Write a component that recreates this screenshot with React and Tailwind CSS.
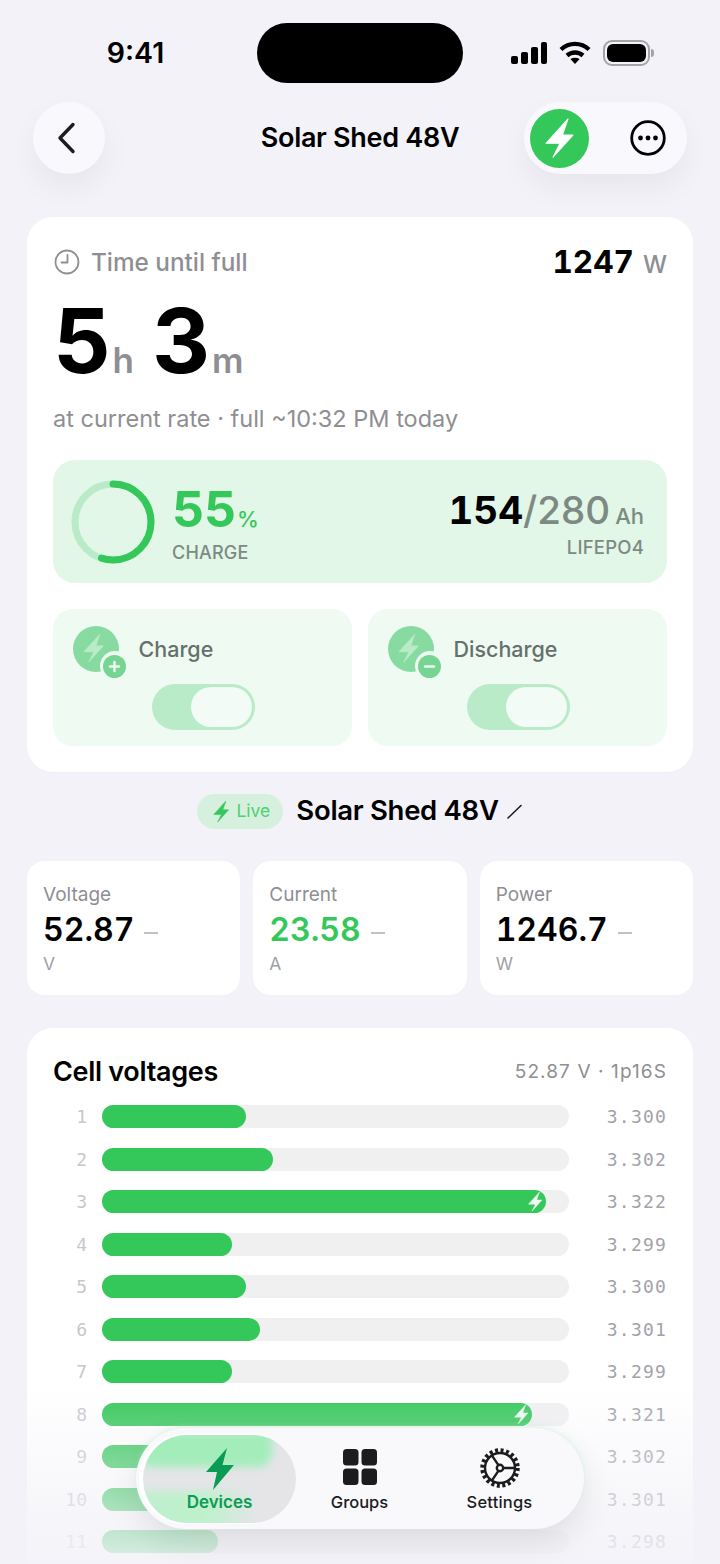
import { Fragment } from 'react'

const BOLT = 'M16.6 1.1 4 15h8L8 23l11.4-12.7h-6z'

const cells = [
  { n: 1, w: 144, v: '3.300' },
  { n: 2, w: 171, v: '3.302' },
  { n: 3, w: 444, v: '3.322', bolt: true },
  { n: 4, w: 130, v: '3.299' },
  { n: 5, w: 144, v: '3.300' },
  { n: 6, w: 158, v: '3.301' },
  { n: 7, w: 130, v: '3.299' },
  { n: 8, w: 430, v: '3.321', bolt: true },
  { n: 9, w: 171, v: '3.302' },
  { n: 10, w: 158, v: '3.301' },
  { n: 11, w: 116, v: '3.298' },
]

function Bolt({ className }) {
  return (
    <svg viewBox="0 0 24 24" className={className} fill="currentColor" stroke="currentColor" strokeWidth="0.6" strokeLinejoin="round">
      <path d={BOLT} />
    </svg>
  )
}

function StatusIcons() {
  return (
    <div className="flex items-center h-[60px] ml-[48px]">
      <svg width="36" height="22" viewBox="0 0 36 22" fill="#000">
        <rect x="0" y="14" width="7" height="8" rx="2" />
        <rect x="10" y="10" width="7" height="12" rx="2" />
        <rect x="20" y="5" width="7" height="17" rx="2" />
        <rect x="30" y="0" width="6" height="22" rx="2" />
      </svg>
      <svg width="32" height="24" viewBox="0 0 32 24" fill="none" stroke="#000" strokeWidth="4.4" className="ml-[12px]">
        <path d="M2 8.5C10 1 22 1 30 8.5" />
        <path d="M8 14.5c4.8-4 11.2-4 16 0" />
        <path d="M16 23l-4.6-5c2.8-1.8 6.4-1.8 9.2 0z" fill="#000" stroke="none" />
      </svg>
      <div className="relative ml-[12px] w-[47px] h-[26px] rounded-[9px] border-2 border-[#a4a4a8] p-[2px]">
        <div className="w-full h-full rounded-[6px] bg-black" />
        <div className="absolute right-[-6px] top-[7px] w-[3px] h-[8px] rounded-r-full bg-[#a4a4a8]" />
      </div>
    </div>
  )
}

function Header() {
  return (
    <div className="flex items-center h-[72px] px-[33px]">
      <button className="w-[72px] h-[72px] shrink-0 rounded-full bg-[#f9f9fd] flex items-center justify-center shadow-[0_14px_30px_rgba(0,0,0,0.05)]">
        <svg width="24" height="34" viewBox="0 0 24 34" fill="none" stroke="#1c1c1e" strokeWidth="3.4" strokeLinecap="round" strokeLinejoin="round" className="-translate-x-[2px]">
          <path d="M18 3.5 5 17l13 13.5" />
        </svg>
      </button>
      <div className="flex-1 text-center pl-[91px] text-[27px] font-semibold text-black tracking-[-0.3px]">Solar Shed 48V</div>
      <div className="w-[163px] h-[72px] shrink-0 rounded-full bg-[#f9f9fd] flex items-center justify-between pl-[6px] pr-[21px] shadow-[0_14px_30px_rgba(0,0,0,0.05)]">
        <div className="w-[59px] h-[59px] rounded-full bg-[#34c759] flex items-center justify-center text-white">
          <Bolt className="w-[42px] h-[42px]" />
        </div>
        <svg width="36" height="36" viewBox="0 0 36 36" fill="#000">
          <circle cx="18" cy="18" r="16.3" fill="none" stroke="#000" strokeWidth="2.8" />
          <circle cx="10.5" cy="18" r="2.4" />
          <circle cx="18" cy="18" r="2.4" />
          <circle cx="25.5" cy="18" r="2.4" />
        </svg>
      </div>
    </div>
  )
}

function Ring() {
  return (
    <svg width="84" height="84" viewBox="0 0 84 84" fill="none" className="shrink-0">
      <circle cx="42" cy="42" r="38" stroke="#b9ebc8" strokeWidth="7" />
      <circle
        cx="42"
        cy="42"
        r="38"
        stroke="#34c759"
        strokeWidth="7"
        strokeLinecap="round"
        strokeDasharray="131 239"
        transform="rotate(-90 42 42)"
      />
    </svg>
  )
}

function ToggleCard({ label, sign }) {
  return (
    <div className="flex-1 h-[137px] rounded-[20px] bg-[#eefaf2] pt-[17px] pl-[19.5px]">
      <div className="flex items-center">
        <div className="relative w-[46px] h-[46px] rounded-full bg-[#88dba0] flex items-center justify-center text-[#b9ebc8]">
          <Bolt className="w-[30px] h-[30px] -translate-x-[2px] -translate-y-[1px]" />
          <div className="absolute right-[-11px] bottom-[-9px] w-[30px] h-[30px] rounded-full bg-[#eefaf2] flex items-center justify-center">
            <div className="w-[23px] h-[23px] rounded-full bg-[#76d592] flex items-center justify-center">
              <svg width="13" height="13" viewBox="0 0 13 13" stroke="#eefaf2" strokeWidth="2.4" strokeLinecap="round">
                <path d="M2 6.5h9" />
                {sign === '+' && <path d="M6.5 2v9" />}
              </svg>
            </div>
          </div>
        </div>
        <span className="ml-[20px] text-[21.5px] font-medium text-[#66706a]">{label}</span>
      </div>
      <div className="flex justify-center mt-[12px] pr-[17px]">
        <div className="w-[103px] h-[46px] rounded-full bg-[#b9ebc8] p-[3px] flex justify-end">
          <div className="w-[61px] h-[40px] rounded-full bg-[#f2fbf5]" />
        </div>
      </div>
    </div>
  )
}

function Summary() {
  return (
    <div className="mt-[43px] mx-[27px] h-[555px] rounded-[26px] bg-white px-[26px] pt-[26px] shadow-[0_1px_2px_rgba(0,0,0,0.02)]">
      <div className="flex items-center justify-between h-[38px]">
        <div className="flex items-center gap-[11px] ml-[1px]">
          <svg width="26" height="26" viewBox="0 0 26 26" fill="none" stroke="#8e8e93" strokeWidth="1.8" strokeLinecap="round" strokeLinejoin="round">
            <circle cx="13" cy="13" r="11.5" />
            <path d="M13.5 6v7.5H7.5" />
          </svg>
          <span className="text-[24.3px] font-medium text-[#8e8e93]">Time until full</span>
        </div>
        <div className="flex items-baseline gap-[9px]">
          <span className="text-[31.5px] font-bold text-black tabular-nums">1247</span>
          <span className="text-[24px] font-medium text-[#8e8e93]">W</span>
        </div>
      </div>
      <div className="flex items-baseline h-[106px] mt-[7px] leading-none">
        <span className="text-[90px] font-bold text-black leading-[106px] tracking-[-1px]">5</span>
        <span className="text-[35px] font-semibold text-[#8e8e93] ml-[3px]">h</span>
        <span className="text-[90px] font-bold text-black leading-[106px] tracking-[-1px] ml-[18px]">3</span>
        <span className="text-[35px] font-semibold text-[#8e8e93] ml-[3px]">m</span>
      </div>
      <div className="mt-[10px] h-[30px] text-[23.5px] leading-[30px] text-[#8e8e93]">at current rate · full ~10:32 PM today</div>

      <div className="mt-[26px] h-[123px] rounded-[22px] bg-[#e2f7e8] flex items-center justify-between pl-[18px] pr-[23px]">
        <div className="flex items-center">
          <Ring />
          <div className="ml-[17px]">
            <div className="flex items-baseline h-[48px] leading-none mt-[7px]">
              <span className="text-[50px] font-bold text-[#34c759] leading-[48px]">55</span>
              <span className="text-[22px] font-medium text-[#34c759] ml-[1px]">%</span>
            </div>
            <div className="text-[18px] font-medium text-[#7d8a82] mt-[6px] tracking-[0.2px]">CHARGE</div>
          </div>
        </div>
        <div className="flex flex-col items-end pt-[5px]">
          <div className="flex items-baseline leading-none h-[46px]">
            <span className="text-[38.5px] font-bold text-black leading-[46px] tabular-nums">154</span>
            <span className="text-[38.5px] font-medium text-[#7d8a82] leading-[46px]">/280</span>
            <span className="text-[22px] font-medium text-[#7d8a82] ml-[5px]">Ah</span>
          </div>
          <div className="text-[18.5px] font-medium text-[#7d8a82] tracking-[0.2px] mt-[1px]">LIFEPO4</div>
        </div>
      </div>

      <div className="flex gap-[16px] mt-[26px]">
        <ToggleCard label="Charge" sign="+" />
        <ToggleCard label="Discharge" sign="-" />
      </div>
    </div>
  )
}

function LiveRow() {
  return (
    <div className="flex items-center justify-center mt-[21px] h-[36px] pl-[1px]">
      <div className="w-[86px] h-[35px] rounded-full bg-[#d6f0de] flex items-center justify-center gap-[3px] text-[#34c759]">
        <Bolt className="w-[23px] h-[23px]" />
        <span className="text-[17.5px] text-[#4fcf72]">Live</span>
      </div>
      <span className="ml-[13px] text-[27.5px] font-semibold text-black tracking-[-0.3px]">Solar Shed 48V</span>
      <svg width="18" height="18" viewBox="0 0 18 18" fill="none" stroke="#1c1c1e" strokeLinecap="round" className="ml-[7px]">
        <path d="M2 16 15 3.5" strokeWidth="1.6" />
      </svg>
    </div>
  )
}

function Stat({ label, value, unit, green }) {
  return (
    <div className="flex-1 h-[134px] rounded-[18px] bg-white pl-[16px] pt-[22px]">
      <div className="text-[19px] leading-[24px] text-[#8e8e93]">{label}</div>
      <div className="flex items-center mt-[5px] h-[36px]">
        <span className={`text-[32px] font-semibold leading-[36px] tabular-nums ${green ? 'text-[#34c759]' : 'text-black'}`}>{value}</span>
        <span className="ml-[10px] w-[14px] h-[2px] mt-[6px] bg-[#c2c2c6]" />
      </div>
      <div className="text-[17.5px] leading-[22px] mt-[5px] text-[#a0a0a5]">{unit}</div>
    </div>
  )
}

function CellRow({ n, w, v, bolt }) {
  return (
    <div className="flex items-center h-[42.5px]">
      <div className="w-[34px] text-right text-[18px] text-[#c7c7cc] [font-family:'DejaVu_Sans_Mono',monospace]">{n}</div>
      <div className="ml-[15px] w-[467px] h-[23px] rounded-full bg-[#f0f0f1]">
        <div className="h-full rounded-full bg-[#34c759] flex items-center justify-end text-[#eefaf2]" style={{ width: w }}>
          {bolt && <Bolt className="w-[21px] h-[21px]" />}
        </div>
      </div>
      <div className="ml-auto text-[18px] tracking-[1.2px] text-[#a2a2a7] [font-family:'DejaVu_Sans_Mono',monospace]">{v}</div>
    </div>
  )
}

function CellCard() {
  return (
    <div className="mt-[33px] mx-[27px] rounded-[26px] bg-white px-[26px] pt-[26px] pb-[30px]">
      <div className="flex items-center justify-between h-[36px]">
        <span className="text-[27px] font-semibold text-black tracking-[-0.3px]">Cell voltages</span>
        <span className="text-[19px] tracking-[1.1px] text-[#8e8e93]">52.87 V · 1p16S</span>
      </div>
      <div className="mt-[5.5px]">
        {cells.map((c) => (
          <Fragment key={c.n}>
            <CellRow {...c} />
          </Fragment>
        ))}
      </div>
    </div>
  )
}

function NavBar() {
  return (
    <div className="absolute left-[136px] top-[1428px] w-[448px] h-[101px] rounded-full bg-[#f9f9fc] shadow-[0_14px_34px_rgba(0,0,0,0.09),0_-2px_5px_rgba(190,240,205,0.35)] flex items-center p-[7px]">
      {/* active tab: gray capsule with the smeared green glass bands */}
      <div className="relative w-[153px] h-[88px] rounded-full bg-[#e5e5e8] overflow-hidden shrink-0 flex flex-col items-center justify-center pt-[3px] shadow-[-3px_0_0_1px_rgba(255,255,255,0.9)]">
        <div className="absolute left-[-4px] top-[-4px] w-[133px] h-[36px] bg-[#a3edba] blur-[4px] rounded-b-[14px]" />
        <div className="absolute left-[-8px] top-[56px] w-[122px] h-[40px] bg-gradient-to-r from-[#bff0cd] from-60% to-[#bff0cd]/0 blur-[4px]" />
        <svg width="34" height="44" viewBox="0 0 34 44" fill="#0a9c52" className="relative">
          <path d="M24 1 3 25h11L10 43 31 18H19.5z" />
        </svg>
        <span className="relative text-[17px] font-semibold text-[#0a9c52] leading-[22px]">Devices</span>
      </div>
      <div className="w-[127px] flex flex-col items-center pt-[4px]">
        <svg width="36" height="38" viewBox="0 0 36 38" fill="#1c1c1e">
          <rect x="1" y="1" width="15.5" height="16.5" rx="3.5" />
          <rect x="19.5" y="1" width="15.5" height="16.5" rx="3.5" />
          <rect x="1" y="20.5" width="15.5" height="16.5" rx="3.5" />
          <rect x="19.5" y="20.5" width="15.5" height="16.5" rx="3.5" />
        </svg>
        <span className="text-[16.5px] font-medium text-[#1c1c1e] leading-[22px] mt-[5px]">Groups</span>
      </div>
      <div className="w-[153px] flex flex-col items-center pt-[4px]">
        <svg width="40" height="40" viewBox="0 0 40 40" fill="none" stroke="#1c1c1e">
          <circle cx="20" cy="20" r="17.5" strokeWidth="4.5" strokeDasharray="3 2.5" />
          <circle cx="20" cy="20" r="15" strokeWidth="2.4" />
          <circle cx="20" cy="20" r="3.2" strokeWidth="2.4" />
          <path d="M23 20h12M18.4 17.2 11.5 6.8M18.4 22.8 11.5 33.2" strokeWidth="2.4" />
        </svg>
        <span className="text-[16.5px] font-medium text-[#1c1c1e] leading-[22px] mt-[3px] tracking-[0.2px]">Settings</span>
      </div>
    </div>
  )
}

export default function App() {
  return (
    <div className="relative w-[720px] h-[1564px] overflow-hidden bg-[#f2f2f8] font-['Inter',sans-serif]">
      <div className="flex h-[102px] pt-[23px]">
        <div className="w-[257px] h-[60px] flex items-center justify-center pl-[14px] text-[28.5px] font-semibold text-black">9:41</div>
        <div className="w-[206px] h-[60px] rounded-full bg-black" />
        <StatusIcons />
      </div>
      <Header />
      <Summary />
      <LiveRow />
      <div className="flex gap-[13px] mx-[27px] mt-[32px]">
        <Stat label="Voltage" value="52.87" unit="V" />
        <Stat label="Current" value="23.58" unit="A" green />
        <Stat label="Power" value="1246.7" unit="W" />
      </div>
      <CellCard />
      {/* bottom fade under the floating tab bar */}
      <div className="absolute left-0 right-0 bottom-0 h-[180px] bg-gradient-to-b from-[#f2f2f8]/0 to-[#f2f2f8]/90" />
      <NavBar />
    </div>
  )
}
